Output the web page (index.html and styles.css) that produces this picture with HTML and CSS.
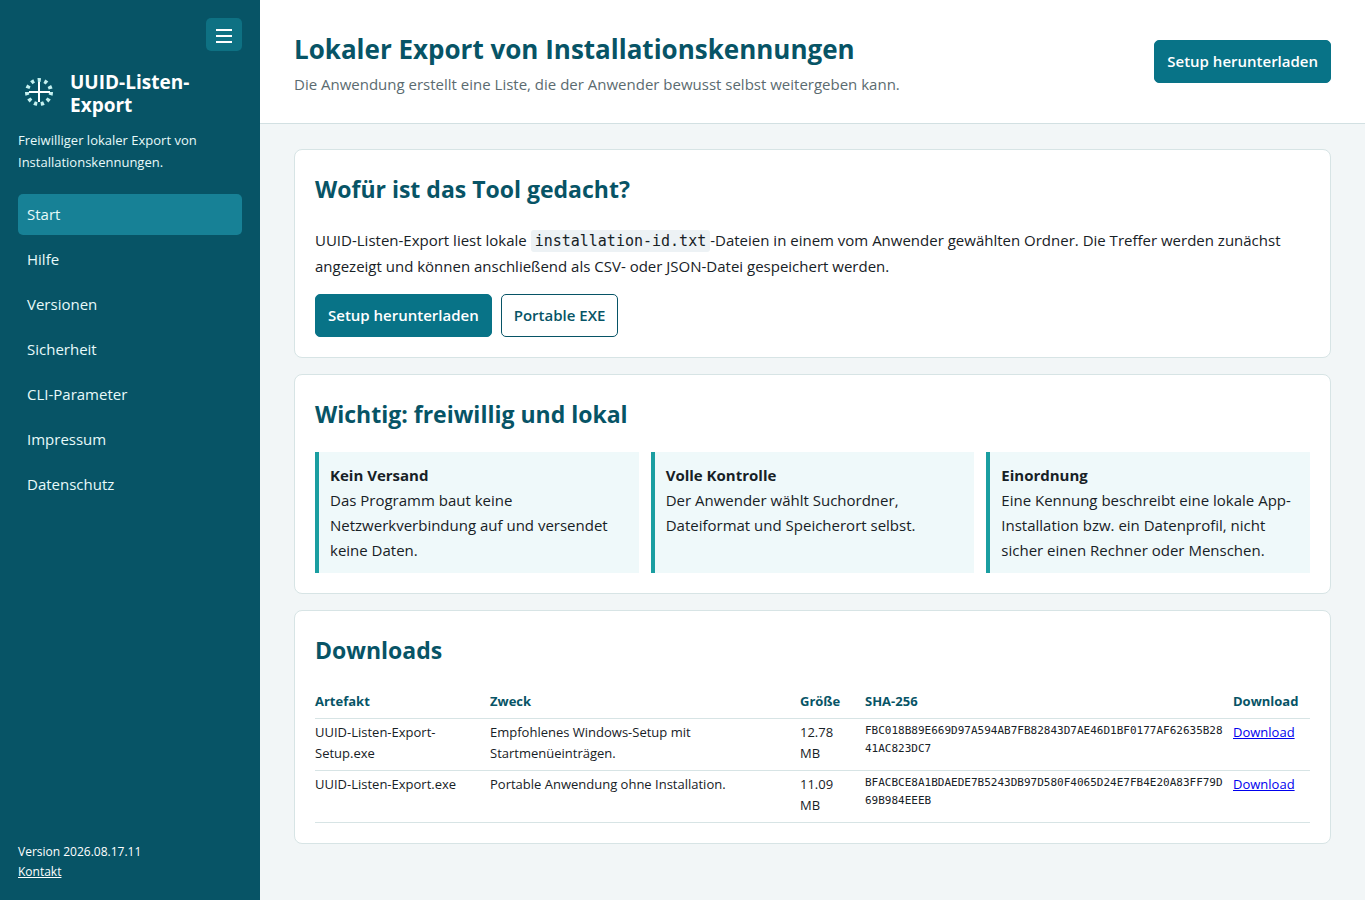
FILE: index.html
```html
<!DOCTYPE html>
<html lang="de">
<head>
    <meta charset="utf-8">
    <meta name="viewport" content="width=device-width, initial-scale=1">
    <title>UUID-Listen-Export</title>
    <link rel="stylesheet" href="styles.css">
</head>
<body>
<div class="layout">
    <aside class="sidebar">
        <button class="menu-toggle" type="button" aria-label="Menü">
            <svg width="16" height="17" viewBox="0 0 16 17" fill="#fff">
                <rect x="0" y="3" width="16" height="2"/>
                <rect x="0" y="9" width="16" height="2"/>
                <rect x="0" y="15" width="16" height="2"/>
            </svg>
        </button>
        <div class="brand">
            <svg class="brand-icon" viewBox="0 0 42 42" fill="none">
                <circle cx="21" cy="21" r="12" stroke="#c4f1f0" stroke-width="4" stroke-dasharray="3.2 3.654"/>
                <path d="M21 11v20" stroke="#fff" stroke-width="2"/>
                <path d="M11 21h21" stroke="#fff" stroke-width="2"/>
            </svg>
            <strong class="brand-name">UUID-Listen-Export</strong>
        </div>
        <p class="claim">Freiwilliger lokaler Export von Installationskennungen.</p>
        <nav class="nav">
            <a class="active" href="#start">Start</a>
            <a href="#hilfe">Hilfe</a>
            <a href="#versionen">Versionen</a>
            <a href="#sicherheit">Sicherheit</a>
            <a href="#cli">CLI-Parameter</a>
            <a href="#impressum">Impressum</a>
            <a href="#datenschutz">Datenschutz</a>
        </nav>
        <div class="sidebar-footer">
            <div>Version 2026.08.17.11</div>
            <a href="#kontakt">Kontakt</a>
        </div>
    </aside>

    <div class="content">
        <header class="topbar">
            <div>
                <h1>Lokaler Export von Installationskennungen</h1>
                <p>Die Anwendung erstellt eine Liste, die der Anwender bewusst selbst weitergeben kann.</p>
            </div>
            <a class="button primary" href="#setup">Setup herunterladen</a>
        </header>

        <main>
            <section class="card">
                <h2>Wofür ist das Tool gedacht?</h2>
                <p>UUID-Listen-Export liest lokale <code>installation-id.txt</code>-Dateien in einem vom Anwender gewählten Ordner. Die Treffer werden zunächst angezeigt und können anschließend als CSV- oder JSON-Datei gespeichert werden.</p>
                <div class="actions">
                    <a class="button primary" href="#setup">Setup herunterladen</a>
                    <a class="button" href="#portable">Portable EXE</a>
                </div>
            </section>

            <section class="card">
                <h2>Wichtig: freiwillig und lokal</h2>
                <div class="notes">
                    <div class="note">
                        <strong>Kein Versand</strong><br>
                        Das Programm baut keine Netzwerkverbindung auf und versendet keine Daten.
                    </div>
                    <div class="note">
                        <strong>Volle Kontrolle</strong><br>
                        Der Anwender wählt Suchordner, Dateiformat und Speicherort selbst.
                    </div>
                    <div class="note">
                        <strong>Einordnung</strong><br>
                        Eine Kennung beschreibt eine lokale App-Installation bzw. ein Datenprofil, nicht sicher einen Rechner oder Menschen.
                    </div>
                </div>
            </section>

            <section class="card">
                <h2>Downloads</h2>
                <table>
                    <thead>
                        <tr>
                            <th class="col-name">Artefakt</th>
                            <th>Zweck</th>
                            <th class="col-size">Größe</th>
                            <th class="col-hash">SHA-256</th>
                            <th class="col-link">Download</th>
                        </tr>
                    </thead>
                    <tbody>
                        <tr>
                            <td>UUID-Listen-Export-Setup.exe</td>
                            <td>Empfohlenes Windows-Setup mit Startmenüeinträgen.</td>
                            <td>12.78 MB</td>
                            <td class="hash">FBC018B89E669D97A594AB7FB82843D7AE46D1BF0177AF62635B2841AC823DC7</td>
                            <td><a href="#setup">Download</a></td>
                        </tr>
                        <tr>
                            <td>UUID-Listen-Export.exe</td>
                            <td>Portable Anwendung ohne Installation.</td>
                            <td>11.09 MB</td>
                            <td class="hash">BFACBCE8A1BDAEDE7B5243DB97D580F4065D24E7FB4E20A83FF79D69B984EEEB</td>
                            <td><a href="#portable">Download</a></td>
                        </tr>
                    </tbody>
                </table>
            </section>
        </main>
    </div>
</div>
</body>
</html>
```
FILE: styles.css
```css
* {
    box-sizing: border-box;
}
body {
    margin: 0;
    background: #f2f6f7;
    color: #172126;
    font-family: "Segoe UI", "Open Sans", sans-serif;
    font-size: 15px;
    line-height: 25px;
}
h1, h2, p {
    margin: 0;
}
.layout {
    display: grid;
    grid-template-columns: 260px 1fr;
    min-height: 100vh;
}

/* sidebar */
.sidebar {
    display: flex;
    flex-direction: column;
    padding: 18px;
    background: #075466;
    color: #fff;
}
.menu-toggle {
    display: flex;
    align-items: center;
    justify-content: center;
    align-self: flex-end;
    width: 36px;
    height: 33px;
    padding: 0;
    border: 0;
    border-radius: 5px;
    background: #0e7183;
    cursor: pointer;
}
.brand {
    display: flex;
    align-items: flex-start;
    gap: 10px;
    margin-top: 20px;
}
.brand-icon {
    flex: none;
    width: 42px;
    height: 42px;
}
.brand-name {
    font-size: 19px;
    line-height: 23px;
}
.claim {
    margin: 12px 0 21px;
    font-size: 13px;
    line-height: 22px;
    color: #e8fafa;
}
.nav {
    display: flex;
    flex-direction: column;
    gap: 4px;
}
.nav a {
    padding: 8px 9px;
    border-radius: 5px;
    color: #e8fafa;
    text-decoration: none;
}
.nav a.active {
    background: #178196;
}
.sidebar-footer {
    margin-top: auto;
    font-size: 12px;
    line-height: 20px;
}
.sidebar-footer a {
    color: #fff;
}

/* header */
.topbar {
    display: flex;
    align-items: center;
    justify-content: space-between;
    gap: 20px;
    padding: 26px 34px;
    border-bottom: 1px solid #d2e0e2;
    background: #fff;
}
h1 {
    color: #075466;
    font-size: 26px;
    line-height: 46px;
}
.topbar p {
    color: #5b6b70;
}
.button {
    display: inline-block;
    padding: 8px 12px;
    border: 1px solid #075466;
    border-radius: 5px;
    color: #075466;
    font-weight: 600;
    white-space: nowrap;
    text-decoration: none;
}
.button.primary {
    border-color: #087387;
    background: #087387;
    color: #fff;
}

/* cards */
main {
    display: grid;
    gap: 16px;
    padding: 25px 34px;
}
.card {
    padding: 20px;
    border: 1px solid #d7e4e5;
    border-radius: 8px;
    background: #fff;
}
h2 {
    margin-bottom: 19px;
    color: #075466;
    font-size: 23px;
    line-height: 38px;
}
.card p {
    line-height: 26px;
}
code {
    padding: 2px 4px;
    border-radius: 3px;
    background: #edf2f5;
    font-family: Consolas, "DejaVu Sans Mono", monospace;
    font-size: 15px;
    line-height: 20px;
}
.actions {
    display: flex;
    gap: 9px;
    margin-top: 15px;
}
.notes {
    display: grid;
    grid-template-columns: repeat(3, 1fr);
    gap: 12px;
}
.note {
    padding: 11px 11px 10px;
    border-left: 4px solid #1a9ea1;
    background: #eff9fa;
}

/* downloads */
table {
    width: 100%;
    border-collapse: collapse;
    table-layout: fixed;
    font-size: 13px;
    line-height: 21px;
}
th, td {
    padding: 3px 12px 6px 0;
    border-bottom: 1px solid #d7e4e5;
    text-align: left;
    vertical-align: top;
}
th {
    color: #075466;
}
.col-name {
    width: 175px;
}
.col-size {
    width: 65px;
}
.col-hash {
    width: 368px;
}
.col-link {
    width: 77px;
}
th:last-child, td:last-child {
    padding-right: 0;
}
td a {
    color: #00e;
}
.hash {
    padding-right: 8px;
    font-family: Consolas, "DejaVu Sans Mono", monospace;
    font-size: 11px;
    line-height: 18px;
    word-break: break-all;
}
```
